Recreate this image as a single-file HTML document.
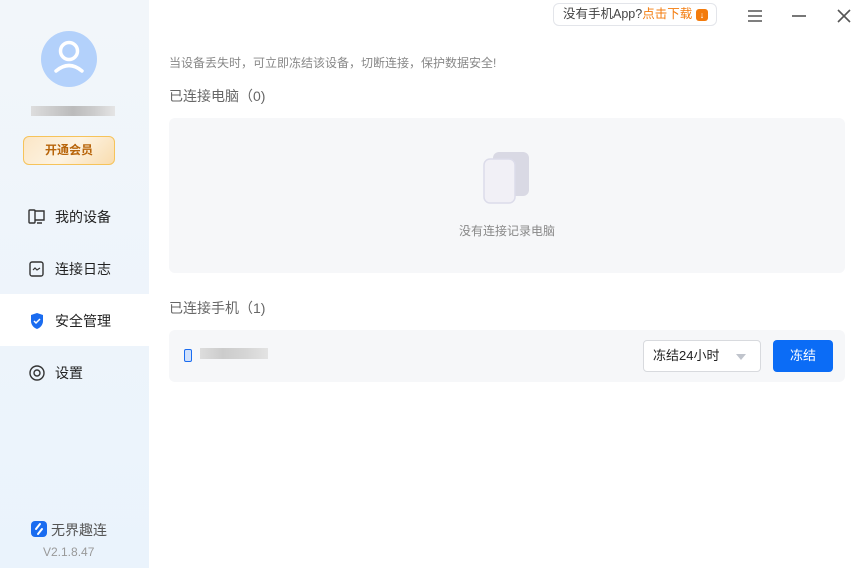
<!DOCTYPE html>
<html><head><meta charset="utf-8"><style>
*{margin:0;padding:0;box-sizing:border-box}
body{width:858px;height:568px;overflow:hidden;font-family:"Liberation Sans","Noto Sans CJK SC",sans-serif;background:#fff;position:relative;color:#222}
.side{position:absolute;left:0;top:0;width:149px;height:568px;background:linear-gradient(#f2f6fa,#eaf3fc)}
.abs{position:absolute}
.nav{position:absolute;left:0;width:149px;height:52px;display:flex;align-items:center;padding-left:28px;font-size:14px;color:#222}
.nav svg{margin-right:9px}
</style></head><body>
<div class="side">
  <div class="abs" style="left:41px;top:31px;width:56px;height:56px;border-radius:50%;background:#b3d1fb">
    <svg width="56" height="56" viewBox="0 0 56 56"><circle cx="28" cy="20" r="8.5" fill="none" stroke="#fff" stroke-width="3.5"/><path d="M15 40 Q28 29 41 40" fill="none" stroke="#fff" stroke-width="3.5" stroke-linecap="round"/></svg>
  </div>
  <div class="abs" style="left:31px;top:106px;width:84px;height:10px;background:linear-gradient(90deg,#ddd,#ccc,#bbb,#ccc,#e5e5e5)"></div>
  <div class="abs" style="left:23px;top:136px;width:92px;height:29px;border:1.5px solid #f6c35a;border-radius:6px;background:linear-gradient(135deg,#fbe6c6,#fdf3e2,#f9dcae);color:#b8650b;font-size:12px;font-weight:bold;text-align:center;line-height:26px">开通会员</div>
  <div class="nav" style="top:191px"><svg width="18" height="16" viewBox="0 0 18 16"><rect x="1" y="1" width="6" height="13" rx="1" fill="none" stroke="#333" stroke-width="1.4"/><path d="M7 2h9v9H7M9 14h5" fill="none" stroke="#333" stroke-width="1.4"/></svg>我的设备</div>
  <div class="nav" style="top:243px"><svg width="18" height="16" viewBox="0 0 18 16"><rect x="2" y="1" width="13" height="14" rx="2" fill="none" stroke="#333" stroke-width="1.4"/><path d="M5 9l2-2 2 2 3-2" fill="none" stroke="#333" stroke-width="1.2"/></svg>连接日志</div>
  <div class="nav" style="top:294px;background:#fff;padding-top:2px"><svg width="18" height="18" viewBox="0 0 18 18"><path d="M3 3l6-2 6 2v6c0 4-3 7-6 8-3-1-6-4-6-8z" fill="#1a6cf0"/><path d="M6 9l2 2 4-4" fill="none" stroke="#fff" stroke-width="1.5"/></svg>安全管理</div>
  <div class="nav" style="top:347px"><svg width="18" height="18" viewBox="0 0 18 18"><circle cx="9" cy="9" r="7" fill="none" stroke="#333" stroke-width="1.4"/><circle cx="9" cy="9" r="3" fill="none" stroke="#333" stroke-width="1.4"/></svg>设置</div>
  <div class="abs" style="left:31px;top:521px;width:16px;height:16px;border-radius:4px;background:#1a6cf0"><svg width="16" height="16" viewBox="0 0 16 16"><path d="M9 3L5 8M11 8l-4 5" stroke="#fff" stroke-width="2" stroke-linecap="round"/></svg></div>
  <div class="abs" style="left:51px;top:520px;font-size:14px;color:#555">无界趣连</div>
  <div class="abs" style="left:43px;top:545px;font-size:12px;color:#999">V2.1.8.47</div>
</div>
<div class="abs" style="left:553px;top:3px;width:164px;height:23px;border:1px solid #e3e5ea;border-radius:6px;font-size:12.5px;line-height:21px;padding-left:9px;color:#444;white-space:nowrap">没有手机App?<span style="color:#f37b0c">点击下载</span><span style="display:inline-block;width:12px;height:12px;background:#f37b0c;border-radius:3px;color:#fff;font-size:9px;line-height:12px;text-align:center;position:absolute;left:142px;top:5px">↓</span></div>
<svg class="abs" style="left:747px;top:9px" width="16" height="14"><path d="M1 2h14M1 7h14M1 12h14" stroke="#555" stroke-width="1.6"/></svg>
<svg class="abs" style="left:791px;top:9px" width="16" height="14"><path d="M1 7h14" stroke="#555" stroke-width="1.6"/></svg>
<svg class="abs" style="left:836px;top:8px" width="16" height="16"><path d="M2 2l12 12M14 2L2 14" stroke="#555" stroke-width="1.6"/></svg>
<div class="abs" style="left:169px;top:54px;font-size:12px;color:#888">当设备丢失时，可立即冻结该设备，切断连接，保护数据安全!</div>
<div class="abs" style="left:169px;top:86px;font-size:14px;color:#666">已连接电脑（0)</div>
<div class="abs" style="left:169px;top:118px;width:676px;height:155px;background:#f6f7f9;border-radius:6px"></div>
<svg class="abs" style="left:482px;top:150px" width="50" height="56"><rect x="11" y="2" width="36" height="44" rx="6" fill="#d9d9e4"/><rect x="2" y="9" width="31" height="44" rx="6" fill="#f1f0f6" stroke="#dcdcea" stroke-width="1.5"/></svg>
<div class="abs" style="left:459px;top:222px;font-size:12px;color:#888">没有连接记录电脑</div>
<div class="abs" style="left:169px;top:298px;font-size:14px;color:#666">已连接手机（1)</div>
<div class="abs" style="left:169px;top:330px;width:676px;height:52px;background:#f6f7f9;border-radius:6px"></div>
<div class="abs" style="left:184px;top:349px;width:8px;height:13px;border:1.5px solid #1a6cf0;border-radius:2px;background:#cfe0fc"></div>
<div class="abs" style="left:200px;top:348px;width:68px;height:11px;background:linear-gradient(90deg,#ddd,#ccc,#d5d5d5,#e3e3e3)"></div>
<div class="abs" style="left:643px;top:340px;width:118px;height:32px;border:1px solid #d8dade;border-radius:4px;background:#fff;font-size:13px;line-height:30px;padding-left:9px">冻结24小时<span style="position:absolute;left:92px;top:13px;border:5px solid transparent;border-top:6px solid #c0c4cc;border-bottom:0"></span></div>
<div class="abs" style="left:773px;top:340px;width:60px;height:32px;background:#0b6cf6;border-radius:4px;color:#fff;font-size:13px;text-align:center;line-height:32px">冻结</div>
</body></html>
